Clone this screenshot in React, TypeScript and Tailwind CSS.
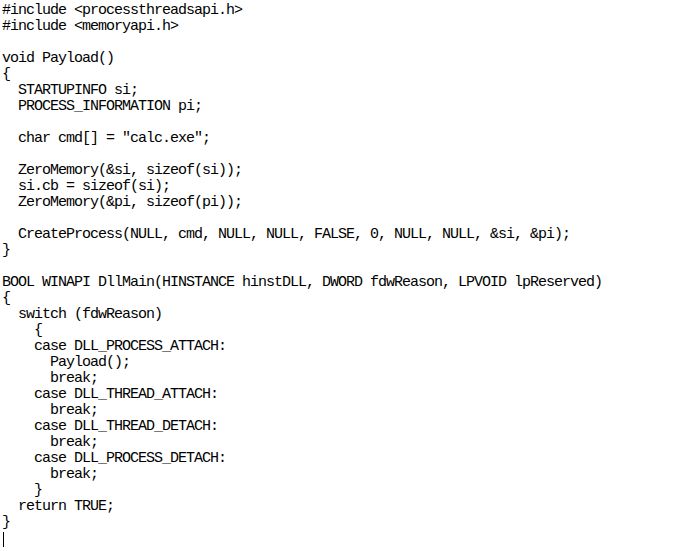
const code = `#include <processthreadsapi.h>
#include <memoryapi.h>

void Payload()
{
  STARTUPINFO si;
  PROCESS_INFORMATION pi;

  char cmd[] = "calc.exe";

  ZeroMemory(&si, sizeof(si));
  si.cb = sizeof(si);
  ZeroMemory(&pi, sizeof(pi));

  CreateProcess(NULL, cmd, NULL, NULL, FALSE, 0, NULL, NULL, &si, &pi);
}

BOOL WINAPI DllMain(HINSTANCE hinstDLL, DWORD fdwReason, LPVOID lpReserved)
{
  switch (fdwReason)
    {
    case DLL_PROCESS_ATTACH:
      Payload();
      break;
    case DLL_THREAD_ATTACH:
      break;
    case DLL_THREAD_DETACH:
      break;
    case DLL_PROCESS_DETACH:
      break;
    }
  return TRUE;
}`

export default function App() {
  return (
    <div className="w-[686px] h-[551px] bg-white overflow-hidden pl-[2px] pt-[3px]">
      <pre className="font-['Liberation_Mono',monospace] text-[15px] tracking-[-1px] leading-4 text-black whitespace-pre">
        {code}
      </pre>
      <div className="h-4 flex items-center">
        <span className="w-px h-[15px] bg-black ml-[1px]" />
      </div>
    </div>
  )
}
